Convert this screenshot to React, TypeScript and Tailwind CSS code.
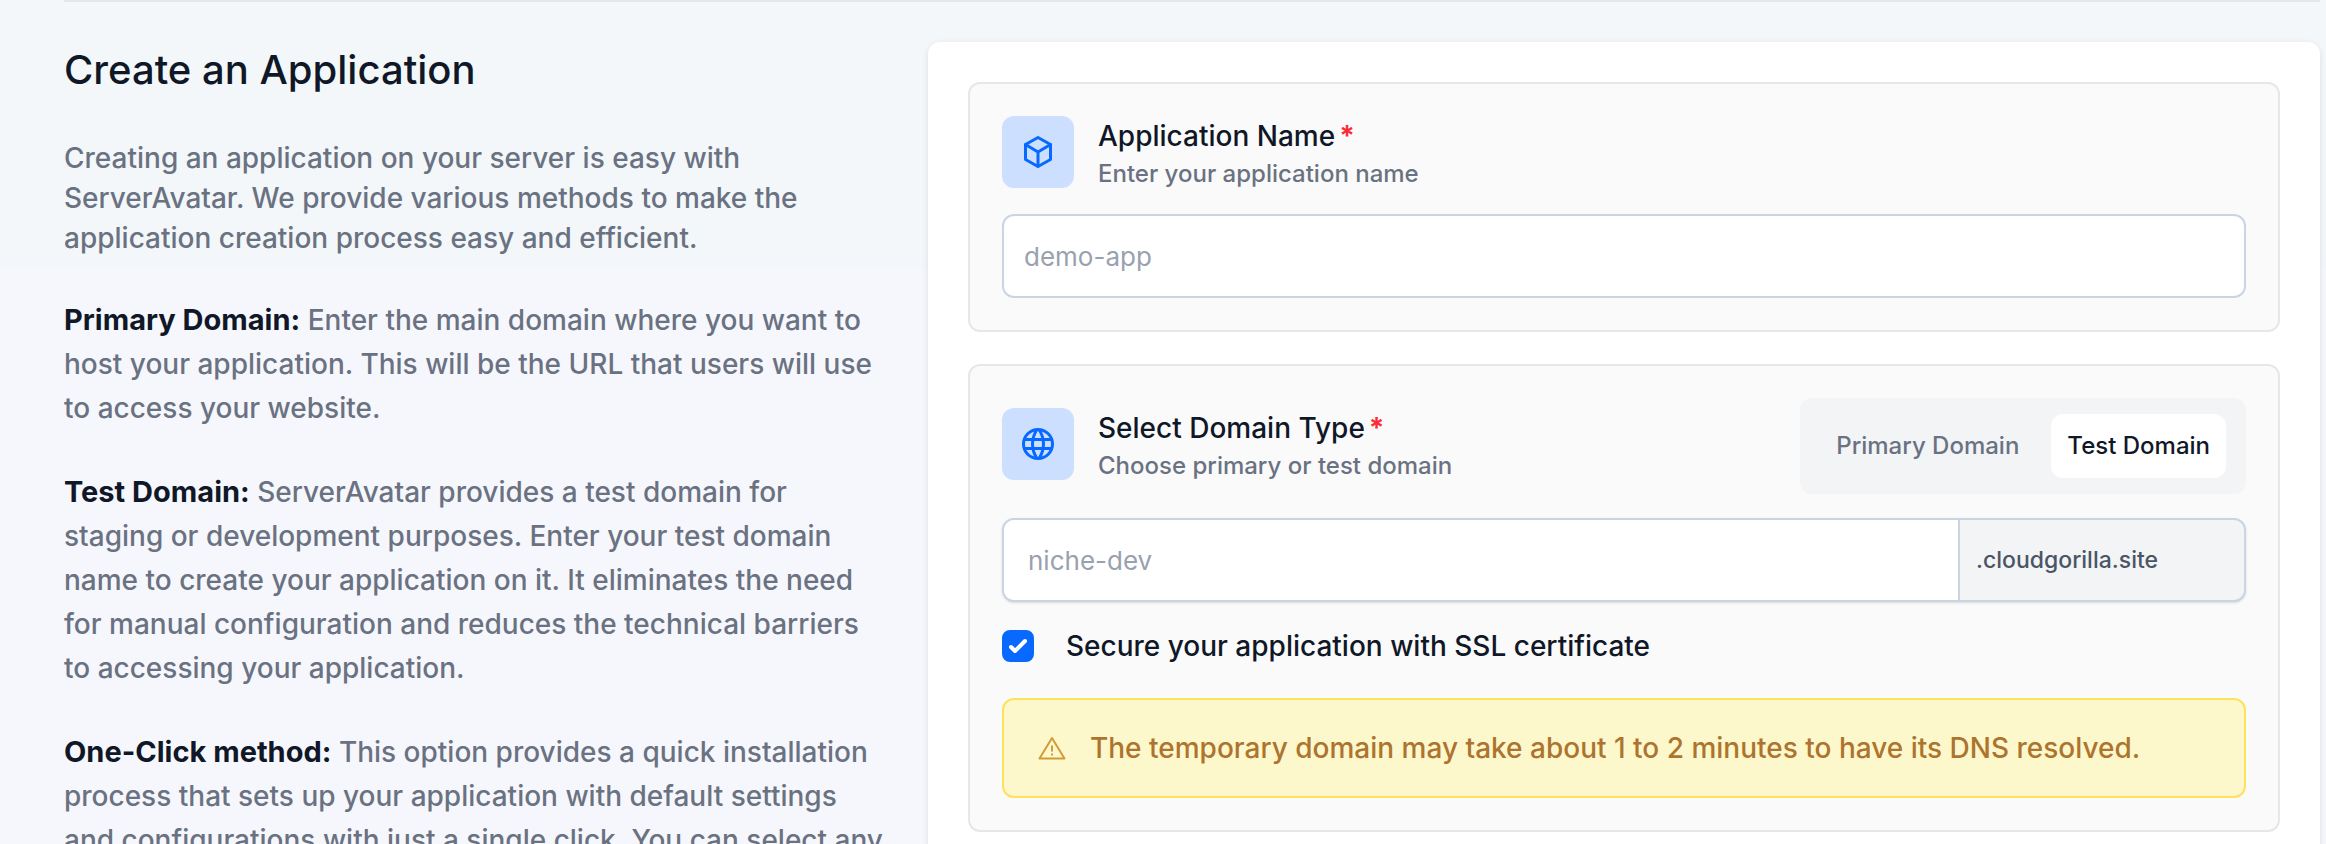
import { useState, type ReactNode } from "react";

const domainTypes = ["Primary Domain", "Test Domain"];

export default function CreateApplication() {
  const [domainType, setDomainType] = useState("Test Domain");
  const [secure, setSecure] = useState(true);

  return (
    <main className="h-screen overflow-hidden bg-[linear-gradient(#f3f7fa_266px,#f6f7fc_266px)] pl-16 pr-[6px] font-['Inter',sans-serif] font-medium text-gray-900">
      <div className="grid grid-cols-[18fr_29fr] border-t-2 border-[#e5e8eb] pt-10">
        <aside className="pr-8 text-[28px] leading-[44px] text-gray-500">
          <h1 className="pt-2 text-[40px] leading-10 text-gray-900">
            Create an Application
          </h1>
          <p className="mt-12 leading-10">
            Creating an application on your server is easy with
            <br />
            ServerAvatar. We provide various methods to make the
            <br />
            application creation process easy and efficient.
          </p>
          <HelpText title="Primary Domain:">
            Enter the main domain where you want to
            <br />
            host your application. This will be the URL that users will use
            <br />
            to access your website.
          </HelpText>
          <HelpText title="Test Domain:">
            ServerAvatar provides a test domain for
            <br />
            staging or development purposes. Enter your test domain
            <br />
            name to create your application on it. It eliminates the need
            <br />
            for manual configuration and reduces the technical barriers
            <br />
            to accessing your application.
          </HelpText>
          <HelpText title="One-Click method:">
            This option provides a quick installation
            <br />
            process that sets up your application with default settings
            <br />
            and configurations with just a single click. You can select any
          </HelpText>
        </aside>

        <form
          className="flex flex-col gap-8 rounded-xl bg-white p-10 shadow-[0_2px_6px_rgba(15,23,42,0.1)]"
          onSubmit={(event) => event.preventDefault()}
        >
          <Section>
            <SectionHeading
              icon={<CubeIcon />}
              htmlFor="application-name"
              title="Application Name"
              description="Enter your application name"
            />
            <input
              id="application-name"
              type="text"
              placeholder="demo-app"
              className="mt-[22px] block h-[84px] w-full rounded-xl border-2 border-slate-300 bg-white px-5 text-[26px] outline-none placeholder:font-normal placeholder:text-gray-400"
            />
          </Section>

          <Section>
            <div className="flex items-center justify-between">
              <SectionHeading
                icon={<GlobeIcon />}
                htmlFor="test-domain"
                title="Select Domain Type"
                description="Choose primary or test domain"
              />
              <div className="flex gap-4 rounded-xl bg-gray-100 px-5 py-4">
                {domainTypes.map((type) => (
                  <button
                    key={type}
                    type="button"
                    aria-pressed={type === domainType}
                    onClick={() => setDomainType(type)}
                    className={`h-16 rounded-xl px-4 text-2xl ${
                      type === domainType
                        ? "bg-white text-gray-900"
                        : "text-gray-500"
                    }`}
                  >
                    {type}
                  </button>
                ))}
              </div>
            </div>

            <div className="mt-6 flex h-[84px] overflow-hidden rounded-xl border-2 border-slate-300 bg-gray-100 shadow-sm">
              <input
                id="test-domain"
                type="text"
                placeholder="niche-dev"
                className="min-w-0 flex-1 bg-white px-6 text-[26px] outline-none placeholder:font-normal placeholder:text-gray-400"
              />
              <span className="flex w-[286px] items-center rounded-r-xl border-l-2 border-slate-300 px-4 text-[23px] text-gray-600">
                .cloudgorilla.site
              </span>
            </div>

            <label className="mt-6 flex items-center gap-8 text-[28px] leading-10">
              <span className="relative size-8 shrink-0">
                <input
                  type="checkbox"
                  checked={secure}
                  onChange={(event) => setSecure(event.target.checked)}
                  className="block size-8 appearance-none rounded-lg border-2 border-slate-300 bg-white checked:border-[#0769ff] checked:bg-[#0769ff]"
                />
                {secure && <CheckIcon />}
              </span>
              Secure your application with SSL certificate
            </label>

            <div className="mt-8 flex h-[100px] items-center gap-6 rounded-xl border-2 border-[#fde15c] bg-[#fdf8cb] px-[34px] text-[28px] text-[#ad742f]">
              <WarningIcon />
              The temporary domain may take about 1 to 2 minutes to have its DNS
              resolved.
            </div>
          </Section>
        </form>
      </div>
    </main>
  );
}

function HelpText({ title, children }: { title: string; children: ReactNode }) {
  return (
    <p className="mt-10">
      <strong className="text-[29px] leading-none font-bold text-gray-900">
        {title}
      </strong>{" "}
      {children}
    </p>
  );
}

function Section({ children }: { children: ReactNode }) {
  return (
    <section className="rounded-xl border-2 border-gray-200 bg-[#fafafa] p-8">
      {children}
    </section>
  );
}

function SectionHeading({
  icon,
  htmlFor,
  title,
  description,
}: {
  icon: ReactNode;
  htmlFor: string;
  title: string;
  description: string;
}) {
  return (
    <div className="flex items-start gap-6">
      <div className="grid size-[72px] place-items-center rounded-xl bg-[#cddfff] text-[#0769ff]">
        {icon}
      </div>
      <div>
        <label htmlFor={htmlFor} className="block text-[28px] leading-10">
          {title}
          <span className="ml-1 font-bold text-red-500">*</span>
        </label>
        <p className="text-2xl leading-9 text-gray-500">{description}</p>
      </div>
    </div>
  );
}

function CubeIcon() {
  return (
    <svg
      viewBox="0 0 36 36"
      className="size-9"
      fill="none"
      stroke="currentColor"
      strokeWidth="3"
      strokeLinejoin="round"
      strokeLinecap="round"
      aria-hidden="true"
    >
      <path d="M18 3.5 30.5 10.5v15L18 32.5 5.5 25.5v-15L18 3.5Z" />
      <path d="M5.5 10.5 18 18l12.5-7.5M18 18v14" />
    </svg>
  );
}

function GlobeIcon() {
  return (
    <svg
      viewBox="0 0 36 36"
      className="size-9"
      fill="none"
      stroke="currentColor"
      strokeWidth="3"
      aria-hidden="true"
    >
      <circle cx="18" cy="18" r="14.5" />
      <path d="M4.5 13.5h27M4.5 22.5h27M17 3.5c-6 9-6 20 0 29M19 3.5c6 9 6 20 0 29" />
    </svg>
  );
}

function CheckIcon() {
  return (
    <svg
      viewBox="0 0 32 32"
      className="pointer-events-none absolute inset-0 size-8 text-white"
      fill="none"
      stroke="currentColor"
      strokeWidth="4"
      strokeLinecap="round"
      strokeLinejoin="round"
      aria-hidden="true"
    >
      <path d="m9 17 4 4L23 11" />
    </svg>
  );
}

function WarningIcon() {
  return (
    <svg
      viewBox="0 0 28 24"
      className="h-6 w-7 shrink-0 text-[#d49a37]"
      fill="none"
      stroke="currentColor"
      strokeWidth="2"
      strokeLinejoin="round"
      aria-hidden="true"
    >
      <path d="M14 2 26.5 22.5h-25L14 2Z" />
      <path d="M14 9.5v6M14 17.5v2" />
    </svg>
  );
}
